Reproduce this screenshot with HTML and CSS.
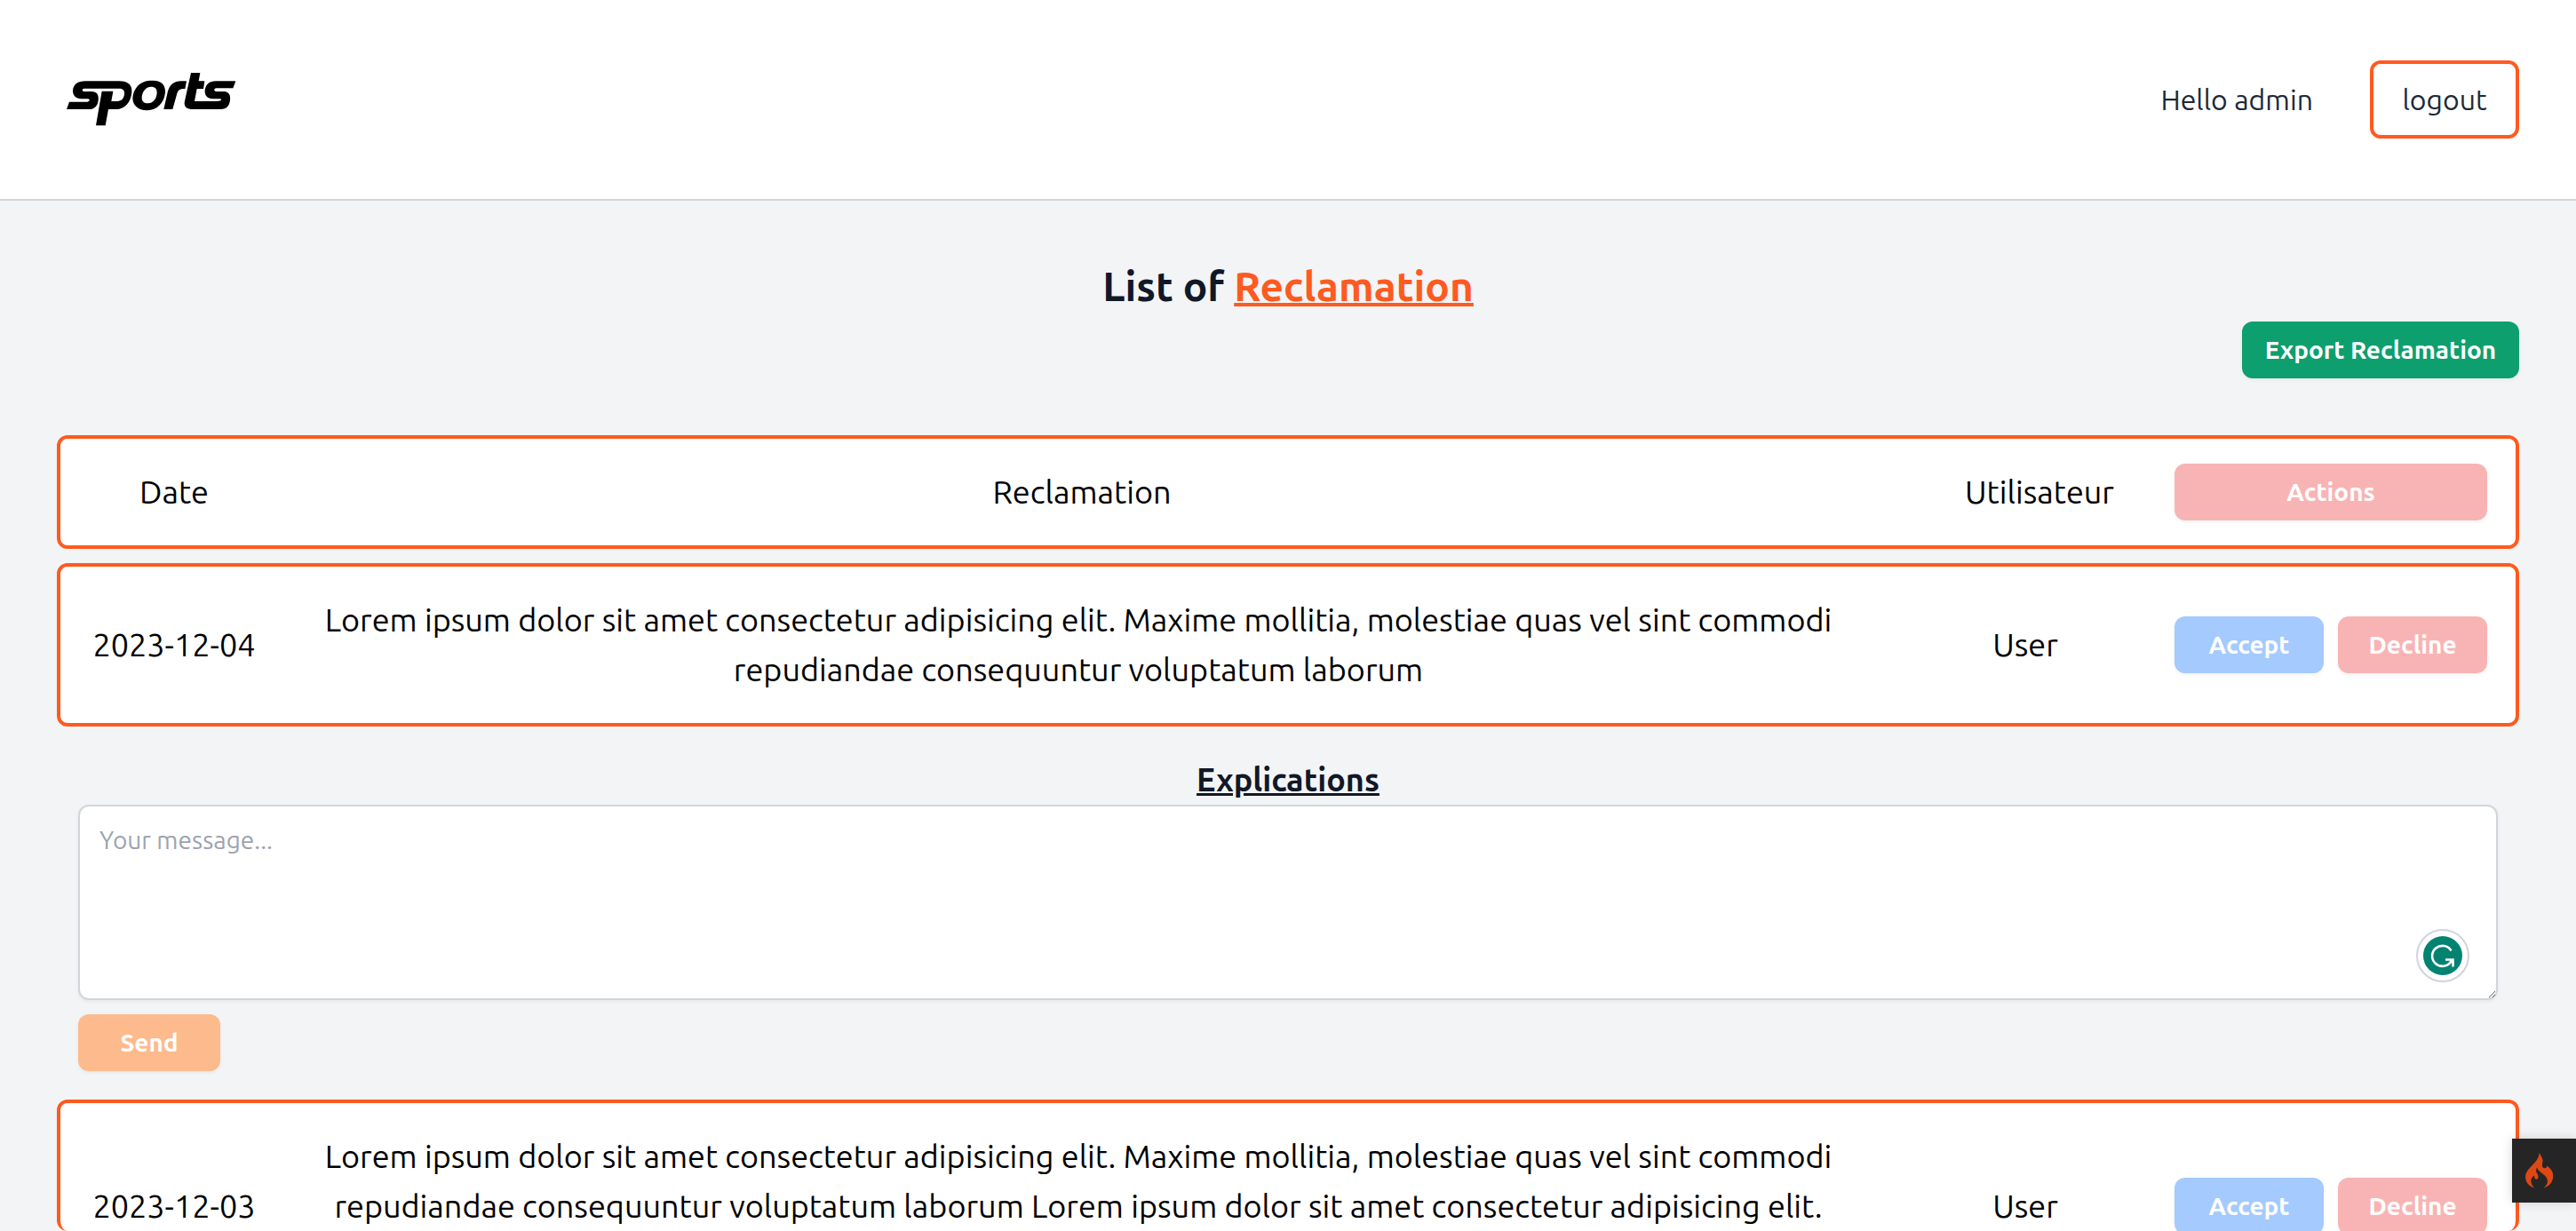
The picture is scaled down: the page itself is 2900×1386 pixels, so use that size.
FILE: index.html
```html
<!DOCTYPE html>
<html lang="en">
<head>
<meta charset="utf-8">
<title>List of Reclamation</title>
<meta name="viewport" content="width=device-width, initial-scale=1">
<link rel="stylesheet" href="styles.css">
</head>
<body>
<header class="topbar">
  <a class="brand" href="#" aria-label="sports">
    <svg class="brand-logo" viewBox="0 0 570 180" aria-hidden="true">
      <path fill-rule="evenodd" d="M63 28H178C208 28 222 42 220 66C217 100 196 123 168 123H141L131 178H99L119 62H157L151 96H170C187 96 195 84 195 69C195 57 189 53 177 53H58C52 54 52 62 58 63H84C102 63 109 74 107 92C105 112 93 123 76 123H0L9 98H70C78 97 80 89 72 88H50C30 87 21 76 21 60C22 40 38 28 63 28Z"/>
      <path fill-rule="evenodd" d="M281 26H293C321 26 335 43 333 67C330 101 305 127 272 127C241 127 223 110 223 85C225 51 249 28 281 26ZM286 47C266 47 254 66 254 84C254 96 261 103 275 103C294 103 305 85 305 66C305 54 299 47 286 47Z"/>
      <path d="M405 28L400 54C384 53 376 58 373 70L358 123H328L341 66C347 40 364 28 385 28Z"/>
      <path d="M420 0H451L446 28H466L462 54H440L432 96H505C521 96 527 91 519 88H494C474 87 466 76 467 60C469 40 482 28 504 28H571L562 52H505C497 53 496 62 505 63H532C548 64 554 74 552 92C550 112 540 123 520 123H422C404 123 397 113 398 100Z"/>
    </svg>
  </a>
  <div class="account">
    <span>Hello admin</span>
    <button class="logout" type="button">logout</button>
  </div>
</header>

<main class="content">
  <h1 class="title">List of <span class="accent">Reclamation</span></h1>
  <div class="toolbar">
    <button class="btn btn-export" type="button">Export Reclamation</button>
  </div>

  <table class="claims">
    <thead>
      <tr class="claim claim-head">
        <th scope="col">Date</th>
        <th scope="col">Reclamation</th>
        <th scope="col">Utilisateur</th>
        <th scope="col"><span class="btn btn-decline">Actions</span></th>
      </tr>
    </thead>
    <tbody>
      <tr class="claim">
        <td>2023-12-04</td>
        <td>Lorem ipsum dolor sit amet consectetur adipisicing elit. Maxime mollitia, molestiae quas vel sint commodi repudiandae consequuntur voluptatum laborum</td>
        <td>User</td>
        <td class="actions">
          <button class="btn btn-accept" type="button">Accept</button>
          <button class="btn btn-decline" type="button">Decline</button>
        </td>
      </tr>
      <tr class="reply-row">
        <td>
          <form class="reply">
            <label class="reply-label" for="message">Explications</label>
            <div class="reply-box">
              <textarea class="reply-input" id="message" placeholder="Your message..."></textarea>
              <svg class="checker" viewBox="0 0 60 60" aria-hidden="true">
                <circle cx="30" cy="30" r="29" fill="#fff" stroke="#d1d3e0" stroke-width="2"/>
                <circle cx="30" cy="30" r="22" fill="#028372"/>
                <path d="M39.500 24.500A11.500 11.500 0 1 0 39 37L41 34.500M33 34.500H41.500V42.500M41 35L37 39.500" fill="none" stroke="#fff" stroke-width="2.600"/>
              </svg>
            </div>
            <button class="btn btn-send" type="button">Send</button>
          </form>
        </td>
      </tr>
      <tr class="claim claim-open">
        <td>2023-12-03</td>
        <td>Lorem ipsum dolor sit amet consectetur adipisicing elit. Maxime mollitia, molestiae quas vel sint commodi repudiandae consequuntur voluptatum laborum Lorem ipsum dolor sit amet consectetur adipisicing elit.</td>
        <td>User</td>
        <td class="actions">
          <button class="btn btn-accept" type="button">Accept</button>
          <button class="btn btn-decline" type="button">Decline</button>
        </td>
      </tr>
    </tbody>
  </table>
</main>

<button class="debug" type="button" aria-label="Debug toolbar">
  <svg class="flame" viewBox="0 0 94 118" aria-hidden="true">
    <path fill="#dd4814" d="M46 0C51 10 60 20 57 32C54 43 56 51 64 51C70 51 73 47 70 43C84 51 93 63 92 80C91 98 78 112 60 117C70 109 75 101 73 91C71 78 59 72 52 66C44 60 39 54 39 48C34 56 34 64 40 70C44 77 44 87 37 88C31 88 29 81 30 75C20 81 16 91 20 101C22 108 26 113 30 117C13 113 0 98 0 80C1 48 44 36 46 0Z"/>
  </svg>
</button>
</body>
</html>
```
FILE: styles.css
```css
* {
  box-sizing: border-box;
}

body {
  margin: 0;
  background: #f3f4f6;
  color: #000;
  font-family: Ubuntu, "Noto Sans", sans-serif;
  font-size: 36px;
  line-height: 56px;
}

button,
textarea {
  font-family: inherit;
}

.topbar {
  display: flex;
  align-items: center;
  justify-content: space-between;
  height: 226px;
  padding: 0 64px;
  background: #fff;
  border-bottom: 2px solid #d1d5db;
}

.brand {
  display: block;
  padding: 0 11px;
}

.brand-logo {
  display: block;
  width: 190px;
  height: 60px;
}

.account {
  display: flex;
  align-items: center;
  gap: 64px;
  color: #1f2937;
  font-size: 32px;
}

.logout {
  width: 168px;
  height: 88px;
  padding: 0;
  background: #fff;
  border: 4px solid #ff5a1f;
  border-radius: 12px;
  color: inherit;
  font-size: 32px;
}

.content {
  padding: 64px 64px 0;
}

.title {
  margin: 0;
  color: #111827;
  font-size: 46px;
  line-height: 64px;
  text-align: center;
}

.accent {
  color: #ff5a1f;
  text-decoration: underline;
  text-decoration-thickness: 4px;
}

.toolbar {
  display: flex;
  justify-content: flex-end;
  padding: 8px 0 64px;
}

.btn {
  display: block;
  height: 64px;
  padding: 0;
  border: 0;
  border-radius: 12px;
  box-shadow: 0 2px 4px rgba(0, 0, 0, 0.05);
  color: #fff;
  font-size: 28px;
  font-weight: 700;
  line-height: 64px;
  text-align: center;
}

.btn-export {
  width: 312px;
  background: #0e9f6e;
}

.btn-accept {
  background: #a4cafe;
}

.btn-decline {
  background: #f8b4b4;
}

.btn-send {
  width: 160px;
  background: #fdba8c;
}

.claims,
.claims thead,
.claims tbody {
  display: flex;
  flex-direction: column;
  gap: 16px;
}

.claim {
  display: grid;
  grid-template-columns: 192px minmax(0, 1fr) 288px 352px;
  column-gap: 24px;
  align-items: center;
  padding: 32px;
  background: #fff;
  border: 4px solid #ff5a1f;
  border-radius: 12px;
  text-align: center;
}

.claim-head {
  grid-template-columns: 192px minmax(0, 1fr) 304px 352px;
  column-gap: 0;
  padding: 28px 32px;
}

.claim-open {
  align-items: end;
  overflow: hidden;
  padding-bottom: 0;
  border-bottom: 0;
}

.claims th,
.claims td {
  padding: 0;
  font-weight: 400;
}

.claims .actions {
  display: grid;
  grid-template-columns: 1fr 1fr;
  gap: 16px;
}

.claim-open .actions {
  margin-bottom: -4px;
}

.reply-row,
.reply-row td {
  display: block;
}

.reply {
  display: flex;
  flex-direction: column;
  align-items: flex-start;
  padding: 16px 24px;
}

.reply-label {
  align-self: center;
  color: #111827;
  font-weight: 700;
  text-decoration: underline;
}

.reply-box {
  position: relative;
  width: 100%;
  margin-bottom: 16px;
}

.reply-input {
  display: block;
  width: 100%;
  height: 220px;
  padding: 18px 22px;
  background: #fff;
  border: 2px solid #d1d5db;
  border-radius: 12px;
  box-shadow: 0 2px 4px rgba(0, 0, 0, 0.05);
  font-size: 28px;
  line-height: 40px;
}

.reply-input::placeholder {
  color: #9ca3af;
}

.checker {
  position: absolute;
  right: 32px;
  bottom: 20px;
  width: 60px;
  height: 60px;
}

.debug {
  position: fixed;
  right: 0;
  bottom: 32px;
  width: 72px;
  height: 72px;
  padding: 0 0 0 15px;
  background: #252525;
  border: 0;
  box-shadow: 0 0 12px rgba(0, 0, 0, 0.15);
}

.flame {
  display: block;
  width: 32px;
  height: 40px;
}
```
